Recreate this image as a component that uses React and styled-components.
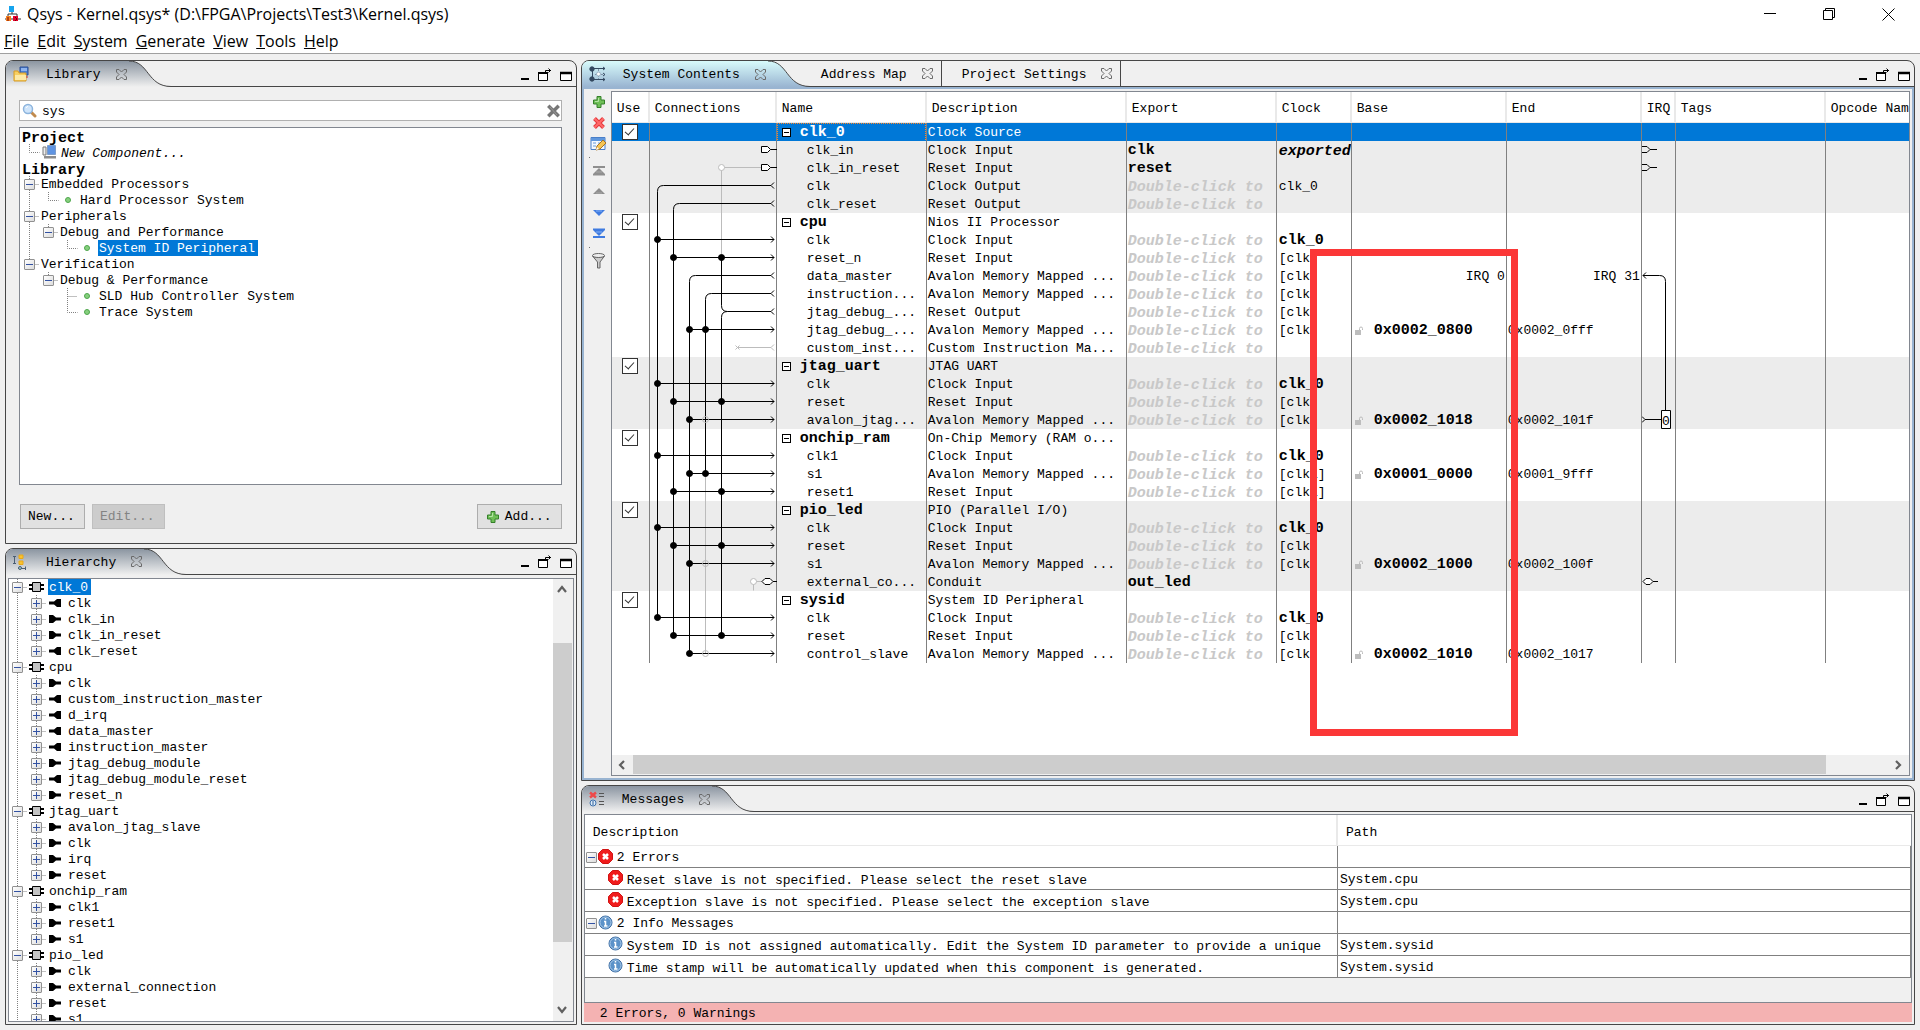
import React from 'react';
import styled, { createGlobalStyle, css } from 'styled-components';

const MONO = '"Liberation Mono", "Noto Sans CJK SC", monospace';
const UI = '"Open Sans", "Noto Sans", sans-serif';
const LINE = '#464646';
const EDGE = '#828790';
const GRID = '#808080';
const SELECT = '#0078d7';
const FACE = '#f0f0f0';

const Global = createGlobalStyle`
  *, *::before, *::after { box-sizing: border-box; }
  body { margin: 0; background: ${FACE}; color: #000; font: 13px/16px ${MONO}; }
  button { font: inherit; color: inherit; padding: 0; border: 0; background: none; }
  svg { display: block; flex: none; }
`;

const Window = styled.div`
  height: 100vh;
  min-height: 640px;
  display: flex;
  flex-direction: column;
  overflow: hidden;
`;
const TitleBar = styled.header`
  display: flex;
  align-items: center;
  height: 30px;
  padding: 0 25px 2px 5px;
  gap: 6px;
  background: #fff;
`;
const TitleText = styled.h1`
  flex: 1;
  margin: 0;
  font: 400 16px/20px ${UI};
`;
const WindowButtons = styled.div`
  display: flex;
  gap: 46px;
`;
const MenuBar = styled.nav`
  display: flex;
  align-items: center;
  gap: 8px;
  height: 24px;
  padding: 0 4px 2px;
  background: #fff;
  border-bottom: 1px solid #a0a0a0;
`;
const MenuItem = styled.button`
  font: 400 16px/20px ${UI};
  &::first-letter { text-decoration: underline; }
`;
const Workspace = styled.main`
  flex: 1;
  min-height: 0;
  display: grid;
  grid-template-columns: minmax(0, 3fr) minmax(0, 7fr);
  gap: 4px;
  padding: 6px 5px 5px;
`;
const Column = styled.div`
  display: flex;
  flex-direction: column;
  gap: 4px;
  min-height: 0;
  min-width: 0;
`;

/* Panels */
const PanelBox = styled.section`
  flex: ${(p) => p.$grow} 1 0;
  min-height: 0;
  display: flex;
  flex-direction: column;
  border: 1px solid ${LINE};
  border-radius: 8px 8px 0 0;
  overflow: hidden;
`;
const TabStrip = styled.div`
  display: flex;
  height: 26px;
  flex: none;
  border-bottom: 1px solid ${LINE};
`;
const gradients = {
  idle: ['#8b95a1', '#f0f0f0'],
  focus: ['#d8fbfb', '#99b4d1'],
};
const ActiveTab = styled.div`
  display: flex;
  height: 26px;
`;
const TabFace = styled.div`
  display: flex;
  align-items: center;
  height: 26px;
  padding: 0 2px 0 7px;
  background: linear-gradient(${(p) => gradients[p.$tone].join(', ')});
`;
const TabLabel = styled.h2`
  margin: 0 15px 0 17px;
  padding-top: 2px;
  font: 400 13px/16px ${MONO};
`;
const SideTab = styled.button`
  display: flex;
  align-items: center;
  gap: 15px;
  padding: 0 8px 0 ${(p) => (p.$first ? '11px' : '20px')};
  border-right: 1px solid ${LINE};
`;
const SideLabel = styled.span`
  padding-top: 2px;
`;
const PanelTools = styled.div`
  display: flex;
  align-items: center;
  gap: 8px;
  margin-left: auto;
  padding: 2px 4px 0 0;
`;

/* Library */
const LibraryBody = styled.div`
  flex: 1;
  min-height: 0;
  display: flex;
  flex-direction: column;
  padding: 13px 14px 14px 13px;
`;
const SearchField = styled.label`
  display: flex;
  align-items: center;
  height: 21px;
  flex: none;
  padding: 0 1px 0 2px;
  background: #fff;
  border: 1px solid #b0b0b0;
`;
const SearchInput = styled.input`
  flex: 1;
  min-width: 0;
  margin-left: 5px;
  padding: 2px 0 0;
  border: 0;
  outline: 0;
  background: none;
  font: 13px/16px ${MONO};
  color: #000;
`;
const TreeBox = styled.div`
  flex: 1;
  min-height: 0;
  display: flex;
  margin-top: ${(p) => (p.$inset ? '0' : '6px')};
  background: #fff;
  border: 1px solid ${EDGE};
`;
const TreeList = styled.ul`
  flex: 1;
  min-width: 0;
  margin: 0;
  padding: ${(p) => (p.$top ? '0 1px' : '0')};
  list-style: none;
  overflow: hidden;
`;
const TreeRow = styled.li`
  display: flex;
  align-items: center;
  height: 16px;
`;
const NodeIcon = styled.span`
  display: flex;
  justify-content: center;
  width: 20px;
  padding-right: ${(p) => (p.$wide ? 4 : 2)}px;
`;
const NodeText = styled.span`
  padding: 2px 3px 0 1px;
  line-height: 14px;
  white-space: pre;
  ${(p) => p.$heading && css`font-size: 15px; font-weight: 700; padding-top: 5px; line-height: 11px;`}
  ${(p) => p.$italic && css`font-style: italic; padding-top: 4px; line-height: 12px;`}
  ${(p) => p.$selected && css`background: ${SELECT}; color: #fff;`}
`;
const ToggleCell = styled.span`
  display: flex;
  align-items: center;
  width: 19px;
  height: 16px;
  position: relative;
`;
const Toggle = styled.button`
  position: absolute;
  left: 3px;
  top: 3px;
  width: 11px;
  height: 11px;
  border: 1px solid #919191;
  border-radius: 1px;
  background: linear-gradient(135deg, #fff, #dcdcdc);
  svg { margin: 1px; }
`;
const ButtonRow = styled.div`
  display: flex;
  gap: 7px;
  margin-top: 19px;
  padding-left: 1px;
`;
const PushButton = styled.button`
  display: flex;
  align-items: center;
  gap: 5px;
  height: 25px;
  padding: 1px 7px 0;
  min-width: 65px;
  background: #e1e1e1;
  border: 1px solid #adadad;
  ${(p) => p.$end && css`margin-left: auto; min-width: 85px; padding-left: 8px;`}
  &:disabled { color: #838383; background: #ccc; border-color: #bfbfbf; min-width: 73px; }
`;
const HierarchyBody = styled.div`
  flex: 1;
  min-height: 0;
  display: flex;
  padding: 3px 2px 2px;
`;
const VBar = styled.div`
  display: flex;
  flex-direction: column;
  align-items: center;
  width: 20px;
  padding: 4px 1px 5px 0;
  background: ${FACE};
`;
const VThumb = styled.div`
  flex: 300;
  width: 19px;
  margin-top: 48px;
  background: #cdcdcd;
`;
const VSpace = styled.div`flex: 62;`;

/* System contents */
const SystemBody = styled.div`
  flex: 1;
  min-height: 0;
  display: flex;
  border: 2px solid #99b4d1;
  padding: 2px 2px 2px 0;
`;
const ToolColumn = styled.div`
  display: flex;
  flex-direction: column;
  align-items: center;
  width: 27px;
  padding: 3px 0 0 3px;
  gap: 5px;
`;
const ToolButton = styled.button`
  display: grid;
  place-items: center;
  width: 20px;
  height: 16px;
`;
const ToolDivider = styled.span`
  width: 1px;
  height: 1px;
  align-self: flex-start;
  margin-left: 2px;
  background: #707070;
`;
const GridFrame = styled.div`
  flex: 1;
  min-width: 0;
  display: flex;
  flex-direction: column;
  position: relative;
  background: #fff;
  border: 1px solid ${EDGE};
`;
const GridView = styled.div`
  flex: 1;
  min-height: 0;
  overflow: hidden;
`;
const DataTable = styled.table`
  width: 100%;
  table-layout: fixed;
  border-spacing: 0;
`;
const HeadCell = styled.th`
  height: 31px;
  padding: 4px 0 0 5px;
  overflow: hidden;
  font-weight: 400;
  text-align: left;
  white-space: nowrap;
  border-right: 2px solid #e9e9e9;
  border-bottom: 1px solid #e9e9e9;
  &:last-child { border-right: 0; }
`;
const GridRow = styled.tr`
  background: ${(p) => (p.$selected ? SELECT : p.$shade ? '#ececec' : '#fff')};
  color: ${(p) => (p.$selected ? '#fff' : '#000')};
`;
const Cell = styled.td`
  height: 18px;
  padding: 1px 1px 0;
  line-height: 17px;
  white-space: nowrap;
  overflow: ${(p) => (p.$canvas ? 'visible' : 'hidden')};
  position: ${(p) => (p.$canvas ? 'relative' : 'static')};
  text-align: ${(p) => p.$align || 'left'};
  border-right: 1px solid ${GRID};
  &:last-child { border-right: 0; }
`;
const Wires = styled.svg`
  position: absolute;
  left: 0;
  top: 0;
`;
const NameBox = styled.div`
  display: flex;
  align-items: center;
  height: 17px;
  padding-left: ${(p) => (p.$child ? 29 : 4)}px;
  gap: 9px;
  ${(p) => p.$focus && css`outline: 1px dotted #ff8728;`}
`;
const Fold = styled.button`
  display: grid;
  place-items: center;
  width: 9px;
  height: 9px;
  background: #fff;
  border: 1px solid #000;
  &::after { content: ''; width: 5px; height: 1px; background: #000; }
`;
const Strong = styled.b`
  display: block;
  font-size: 15px;
  line-height: 17px;
  font-weight: 700;
`;
const Hint = styled.span`
  display: block;
  padding-top: 3px;
  font: italic 700 15px/14px ${MONO};
  color: ${(p) => (p.$dark ? '#000' : '#c8c8c8')};
`;
const ClockBox = styled.div`
  padding-left: 1px;
  height: 17px;
`;
const BaseBox = styled.div`
  display: flex;
  align-items: center;
  gap: 10px;
  height: 17px;
  padding-left: 2px;
`;
const UseBox = styled.input`
  appearance: none;
  display: grid;
  place-items: center;
  width: 16px;
  height: 16px;
  margin: 0 0 1px 9px;
  background: #fff;
  border: 1px solid #333;
  &:checked::after {
    content: '';
    width: 5px;
    height: 9px;
    margin-bottom: 3px;
    border: solid #333;
    border-width: 0 1px 1px 0;
    transform: rotate(42deg);
  }
`;
const HBar = styled.div`
  display: flex;
  align-items: center;
  height: 20px;
  flex: none;
  padding: 0 5px 1px 4px;
  background: ${FACE};
`;
const HThumb = styled.div`
  flex: 1193;
  height: 19px;
  margin-left: 5px;
  background: #cdcdcd;
`;
const HSpace = styled.div`flex: 66;`;
const RedFrame = styled.div`
  position: absolute;
  left: 698px;
  top: 157px;
  width: 208px;
  height: 487px;
  border: 7px solid #fb3737;
`;

/* Messages */
const MessagesBody = styled.div`
  flex: 1;
  min-height: 0;
  display: flex;
  flex-direction: column;
  padding: 2px;
`;
const MessagesFrame = styled.div`
  flex: 1;
  min-height: 0;
  overflow: hidden;
  border: 1px solid ${EDGE};
  background: ${FACE};
  ${HeadCell} { background: #fff; padding: 5px 0 0 8px; }
`;
const MessageCell = styled.td`
  height: 22px;
  padding: ${(p) => (p.$path ? '2px 0 0 2px' : '1px 0 0 1px')};
  background: #fff;
  white-space: nowrap;
  overflow: hidden;
  border-right: 1px solid ${GRID};
  border-bottom: 1px solid ${GRID};
`;
const MessageBox = styled.div`
  display: flex;
  align-items: center;
  gap: ${(p) => (p.$child ? 4 : 1)}px;
  height: 20px;
  padding-left: ${(p) => (p.$child ? 22 : 0)}px;
`;
const MessageIcon = styled.span`
  padding-bottom: ${(p) => (p.$child ? 4 : 2)}px;
`;
const MessageText = styled.span`
  padding-left: ${(p) => (p.$child ? 0 : 3)}px;
  padding-top: ${(p) => (p.$child ? 4 : 1)}px;
  line-height: 16px;
`;
const StatusBar = styled.footer`
  height: 19px;
  flex: none;
  padding: 2px 0 0 16px;
  line-height: 17px;
  background: #f4b2b2;
`;
const InlineToggle = styled(Toggle)`
  position: static;
  flex: none;
`;

/* Icons */
const CloseGlyph = () => (
  <svg width="11" height="11" viewBox="0 0 11 11" fill="none" stroke="#6a6a6a">
    <path d="M.5.5h2.500L5.500 3 8 .5h2.500V3L8 5.500 10.500 8v2.500H8L5.500 8 3 10.500H.5V8L3 5.500.5 3z" />
  </svg>
);
const MinGlyph = () => (
  <svg width="9" height="14" viewBox="0 0 9 14"><path d="M0 10h8v2H0z" /></svg>
);
const PopGlyph = () => (
  <svg width="14" height="14" viewBox="0 0 14 14" fill="none" stroke="#000">
    <path d="M.5 4.500h9v8h-9z" fill="#fff" />
    <path d="M0 4.500h10M0 5.500h10M7.500 4V2.500H13M10.500.5l2 2-2 2" />
  </svg>
);
const MaxGlyph = () => (
  <svg width="12" height="14" viewBox="0 0 12 14" fill="none" stroke="#000">
    <path d="M.5 4.500h11v8H.5z" fill="#fff" />
    <path d="M0 5h12" strokeWidth="2.500" />
  </svg>
);
const AppGlyph = () => (
  <svg width="16" height="18" viewBox="0 0 16 18">
    <path d="M7 5v4M3 12V9h9v3M0 14h16" stroke="#333" fill="none" />
    <path d="M4 1h5v6H4z" fill="#16a4ee" />
    <path d="M1 11h5v5H1z" fill="#f58220" />
    <path d="M8 11h5v5H8z" fill="#e5002d" />
    <path d="M3 12v4M10 12l2 2-2 2" stroke="#700" fill="none" />
  </svg>
);
const LibraryGlyph = () => (
  <svg width="16" height="16" viewBox="0 0 16 16">
    <path d="M7 1h8v8H7z" fill="#4a7fd0" stroke="#2c4f94" />
    <path d="M8 2h6v3H8z" fill="#8fb4ee" />
    <path d="M1 5h4l1 2h7v8H1z" fill="#f7cf62" stroke="#d79b25" />
    <path d="M2 9h11v5H2z" fill="#fde9a6" />
    <path d="M14 10v2" stroke="#c33" />
  </svg>
);
const HierarchyGlyph = () => (
  <svg width="16" height="16" viewBox="0 0 16 16" fill="none">
    <path d="M0 2.500h3M1.500 2v8M0 9.500h3" stroke="#4b5d72" />
    <path d="M6 1h4v3.500H6zM6 7h4v3.500H6z" fill="#f9c22f" stroke="#e8a818" />
    <path d="M5 14.500h8M12.500 12.500v4" stroke="#4b5d72" />
    <circle cx="7" cy="14" r="1.500" fill="#9cc" stroke="#4b5d72" />
  </svg>
);
const SystemGlyph = () => (
  <svg width="17" height="16" viewBox="0 0 17 16" fill="none" stroke="#33475f">
    <path d="M3 2.500h13M3 13.500h13M3.500 3v10" />
    <path d="M9.500 3v10M6 8.500h10" stroke="#7f93a8" strokeDasharray="2 1" />
    <circle cx="3" cy="3" r="2.200" fill="#33475f" />
    <circle cx="3" cy="13" r="2.200" fill="#33475f" />
    <circle cx="9.500" cy="8" r="2" fill="#fff" stroke="#9fb3c6" />
    <path d="M14 1l2 1.500L14 4M14 12l2 1.500L14 15M14 7l2 1.500L14 10" />
  </svg>
);
const MessagesGlyph = () => (
  <svg width="16" height="16" viewBox="0 0 16 16" fill="none">
    <path d="M1 1.500l6 5M7 1.500l-6 5" stroke="#ee4a4a" strokeWidth="2.500" />
    <circle cx="4" cy="12" r="3" fill="#dcebf8" stroke="#3f72ae" />
    <path d="M4 10v4" stroke="#2c5c98" />
    <path d="M10 2.500h5M10 5.500h5M10 10.500h5M10 13.500h5" stroke="#555" />
  </svg>
);
const SearchGlyph = () => (
  <svg width="15" height="16" viewBox="0 0 15 16">
    <path d="M9 9l4 4" stroke="#c08a4e" strokeWidth="3" strokeLinecap="round" />
    <circle cx="6" cy="6" r="4.500" fill="#cfe5fb" stroke="#8cb4dd" strokeWidth="1.500" />
    <path d="M4 5a2.500 2.500 0 012-1.500" stroke="#fff" fill="none" />
  </svg>
);
const ClearGlyph = () => (
  <svg width="13" height="14" viewBox="0 0 13 14">
    <path d="M2.500 3l8 8M10.500 3l-8 8" stroke="#777" strokeWidth="3.500" strokeLinecap="square" />
    <path d="M3 3l7 8" stroke="#999" />
  </svg>
);
const PlusGlyph = () => (
  <svg width="14" height="14" viewBox="0 0 14 14">
    <path d="M5 1.500h4v3.500h3.500v4H9v3.500H5V9H1.500V5H5z" fill="#6fbf57" stroke="#34802a" />
    <path d="M6.500 3v3.500H3" stroke="#b4e3a4" fill="none" />
  </svg>
);
const RemoveGlyph = () => (
  <svg width="14" height="14" viewBox="0 0 14 14">
    <path d="M2.500 2.500l9 9M11.500 2.500l-9 9" stroke="#e5383b" strokeWidth="4" />
    <path d="M2.500 2.500l9 9M11.500 2.500l-9 9" stroke="#ff6a6a" strokeWidth="2" />
  </svg>
);
const EditGlyph = () => (
  <svg width="17" height="16" viewBox="0 0 17 16">
    <path d="M1 1.500h14v12H1z" fill="#f3f8ff" stroke="#4a7fc8" />
    <path d="M1 2h14v3H1z" fill="#5f97dd" />
    <path d="M3 7h3M3 10h3M8 7h5" stroke="#6b9bd8" />
    <path d="M6 14l1-4 6-6 3 3-6 6z" fill="#f6c553" stroke="#a87424" />
    <path d="M6 14l1-3 2 2z" fill="#fff" />
  </svg>
);
const ArrowGlyph = ({ up, bar, color, light }) => (
  <svg width="14" height="12" viewBox="0 0 14 12">
    <g transform={up ? undefined : 'matrix(1 0 0 -1 0 11)'}>
      {bar && <path d="M1 1h12v2H1z" fill={color} />}
      <path d={bar ? 'M7 3l6 6H1z' : 'M7 2l6 6H1z'} fill={color} />
      <path d="M4 7h6" stroke={light} />
      {bar && <path d="M1 9h12v1.500H1z" fill={color} />}
    </g>
  </svg>
);
const FunnelGlyph = () => (
  <svg width="15" height="17" viewBox="0 0 15 17">
    <path d="M1.500 3l5 6v6h2.500v-6l4.500-6c-3 2-9 2-12 0z" fill="#ccc" stroke="#666" />
    <ellipse cx="7.500" cy="2.500" rx="6" ry="2" fill="#eee" stroke="#666" />
  </svg>
);
const LockGlyph = () => (
  <svg width="9" height="10" viewBox="0 0 9 10">
    <path d="M0 4h6v5H0z" fill="#bdbdbd" />
    <path d="M4.500 4V2.500q0-1.500 1.500-1.500t1.500 1.500V4" fill="none" stroke="#bdbdbd" />
  </svg>
);
const ChipGlyph = () => (
  <svg width="15" height="12" viewBox="0 0 15 12">
    <path d="M0 4h15M0 8h15" stroke="#000" strokeWidth="2" />
    <path d="M3.500 1.500h8v9h-8z" fill="#c4c4c4" stroke="#000" />
  </svg>
);
const PortGlyph = ({ out }) => (
  <svg width="12" height="8" viewBox="0 0 12 8">
    <path transform={out ? 'matrix(-1 0 0 1 12 0)' : undefined} d="M0 0h4l3 2.500h5v3H7L4 8H0z" />
  </svg>
);
const BulletGlyph = () => (
  <svg width="6" height="6" viewBox="0 0 6 6">
    <circle cx="3" cy="3" r="2.500" fill="#86cf7e" stroke="#4ea64c" />
  </svg>
);
const ComponentGlyph = () => (
  <svg width="15" height="14" viewBox="0 0 15 14">
    <path d="M1 2h3v8H1z" fill="#eee" stroke="#777" />
    <path d="M5.500 .5h8v9h-8z" fill="#5f94e2" stroke="#7d9cc8" />
    <path d="M2 11h12v2.500H2z" fill="#8c8c8c" />
  </svg>
);
const ErrorGlyph = () => (
  <svg width="15" height="15" viewBox="0 0 15 15">
    <path d="M4.500.5h6l4 4v6l-4 4h-6l-4-4v-6z" fill="#f01c1c" stroke="#d01414" />
    <path d="M5 5l5 5M10 5l-5 5" stroke="#fff" strokeWidth="2.500" />
  </svg>
);
const InfoGlyph = () => (
  <svg width="15" height="15" viewBox="0 0 15 15">
    <circle cx="7.500" cy="7.500" r="6.500" fill="#5b92c9" stroke="#3d6da3" />
    <circle cx="7.500" cy="7.500" r="5.500" fill="none" stroke="#a9c9e8" />
    <path d="M7.500 3v1.500M6 6.500h1.500v4M6 11h3.500" stroke="#fff" fill="none" strokeWidth="1.500" />
  </svg>
);
const ChevronGlyph = ({ d }) => (
  <svg width="12" height="12" viewBox="0 0 12 12" fill="none" stroke="#606060" strokeWidth="2.200">
    <path d={d} />
  </svg>
);
const SignGlyph = ({ plus }) => (
  <svg width="7" height="7" viewBox="0 0 7 7" stroke="#3352a3">
    <path d={plus ? 'M0 3.500h7M3.500 0v7' : 'M0 3.500h7'} />
  </svg>
);

/* Shared panel pieces */
function TabTail({ tone }) {
  const id = `tail-${tone}`;
  return (
    <svg width="42" height="26" viewBox="0 0 42 26">
      <defs>
        <linearGradient id={id} x1="0" y1="0" x2="0" y2="1">
          <stop offset="0" stopColor={gradients[tone][0]} />
          <stop offset="1" stopColor={gradients[tone][1]} />
        </linearGradient>
      </defs>
      <path d="M0 0C20 0 18 25.500 42 25.500V26H0z" fill={`url(#${id})`} />
      <path d="M0 0C20 0 18 25.500 42 25.500" fill="none" stroke={LINE} />
    </svg>
  );
}

function Panel({ title, icon, tone = 'idle', grow, tabs = [], children }) {
  return (
    <PanelBox $grow={grow} aria-label={title}>
      <TabStrip>
        <ActiveTab>
          <TabFace $tone={tone}>
            {icon}
            <TabLabel>{title}</TabLabel>
            <button aria-label={`Close ${title}`}><CloseGlyph /></button>
          </TabFace>
          <TabTail tone={tone} />
        </ActiveTab>
        {tabs.map((t, i) => (
          <SideTab key={t} $first={i === 0}><SideLabel>{t}</SideLabel><CloseGlyph /></SideTab>
        ))}
        <PanelTools>
          <button aria-label="Minimize"><MinGlyph /></button>
          <button aria-label="Detach"><PopGlyph /></button>
          <button aria-label="Maximize"><MaxGlyph /></button>
        </PanelTools>
      </TabStrip>
      {children}
    </PanelBox>
  );
}

const guidePaths = {
  line: 'M8.500 0v16',
  tee: 'M8.500 0v16M8.500 8.500h10',
  end: 'M8.500 0v8.500h10',
  above: 'M8.500 0v8M8.500 8.500h10',
  blank: '',
};
const Guide = ({ kind }) => (
  <svg width="19" height="16" viewBox="0 0 19 16" fill="none" stroke="#808080" strokeDasharray="1 1">
    <path d={guidePaths[kind]} />
  </svg>
);
const ToggleGuide = ({ kind, plus }) => (
  <ToggleCell>
    <Guide kind={kind} />
    <Toggle aria-label={plus ? 'Expand' : 'Collapse'}><SignGlyph plus={plus} /></Toggle>
  </ToggleCell>
);

/* Data */
const library = [
  { text: 'Project', heading: true },
  { guides: ['end'], icon: 'component', text: 'New Component...', italic: true },
  { text: 'Library', heading: true },
  { toggle: 'tee', text: 'Embedded Processors' },
  { guides: ['line', 'end'], icon: 'bullet', text: 'Hard Processor System' },
  { toggle: 'tee', text: 'Peripherals' },
  { guides: ['line'], toggle: 'above', text: 'Debug and Performance' },
  { guides: ['line', 'blank', 'end'], icon: 'bullet', text: 'System ID Peripheral', selected: true },
  { toggle: 'above', text: 'Verification' },
  { guides: ['blank'], toggle: 'above', text: 'Debug & Performance' },
  { guides: ['blank', 'blank', 'tee'], icon: 'bullet', text: 'SLD Hub Controller System' },
  { guides: ['blank', 'blank', 'end'], icon: 'bullet', text: 'Trace System' },
];
const hierarchy = [
  ['clk_0', '<clk >clk_in >clk_in_reset <clk_reset'],
  ['cpu', '>clk <custom_instruction_master <d_irq <data_master <instruction_master >jtag_debug_module <jtag_debug_module_reset >reset_n'],
  ['jtag_uart', '>avalon_jtag_slave >clk >irq >reset'],
  ['onchip_ram', '>clk1 >reset1 >s1'],
  ['pio_led', '>clk >external_connection >reset >s1'],
];
const AVALON = 'Avalon Memory Mapped ...';
const modules = [
  ['clk_0', 'Clock Source', [
    ['clk_in', 'Clock Input', { out: 'clk', clock: 'exported' }],
    ['clk_in_reset', 'Reset Input', { out: 'reset' }],
    ['clk', 'Clock Output', { clock: 'clk_0', plain: true }],
    ['clk_reset', 'Reset Output', {}],
  ]],
  ['cpu', 'Nios II Processor', [
    ['clk', 'Clock Input', { clock: 'clk_0' }],
    ['reset_n', 'Reset Input', { clock: '[clk]' }],
    ['data_master', AVALON, { clock: '[clk]', irqBase: 'IRQ 0', irqEnd: 'IRQ 31' }],
    ['instruction...', AVALON, { clock: '[clk]' }],
    ['jtag_debug_...', 'Reset Output', { clock: '[clk]' }],
    ['jtag_debug_...', AVALON, { clock: '[clk]', base: '0x0002_0800', end: '0x0002_0fff' }],
    ['custom_inst...', 'Custom Instruction Ma...', {}],
  ]],
  ['jtag_uart', 'JTAG UART', [
    ['clk', 'Clock Input', { clock: 'clk_0' }],
    ['reset', 'Reset Input', { clock: '[clk]' }],
    ['avalon_jtag...', AVALON, { clock: '[clk]', base: '0x0002_1018', end: '0x0002_101f' }],
  ]],
  ['onchip_ram', 'On-Chip Memory (RAM o...', [
    ['clk1', 'Clock Input', { clock: 'clk_0' }],
    ['s1', AVALON, { clock: '[clk1]', base: '0x0001_0000', end: '0x0001_9fff' }],
    ['reset1', 'Reset Input', { clock: '[clk1]' }],
  ]],
  ['pio_led', 'PIO (Parallel I/O)', [
    ['clk', 'Clock Input', { clock: 'clk_0' }],
    ['reset', 'Reset Input', { clock: '[clk]' }],
    ['s1', AVALON, { clock: '[clk]', base: '0x0002_1000', end: '0x0002_100f' }],
    ['external_co...', 'Conduit', { out: 'out_led' }],
  ]],
  ['sysid', 'System ID Peripheral', [
    ['clk', 'Clock Input', { clock: 'clk_0' }],
    ['reset', 'Reset Input', { clock: '[clk]' }],
    ['control_slave', AVALON, { clock: '[clk]', base: '0x0002_1010', end: '0x0002_1017' }],
  ]],
];
const columns = [
  ['Use', 38], ['Connections', 127], ['Name', 150], ['Description', 200], ['Export', 150],
  ['Clock', 75], ['Base', 155], ['End', 135], ['IRQ', 34], ['Tags', 150], ['Opcode Name', null],
];
const messages = [
  { kind: 'error', text: '2 Errors' },
  { kind: 'error', child: true, text: 'Reset slave is not specified. Please select the reset slave', path: 'System.cpu' },
  { kind: 'error', child: true, text: 'Exception slave is not specified. Please select the exception slave', path: 'System.cpu' },
  { kind: 'info', text: '2 Info Messages' },
  { kind: 'info', child: true, text: 'System ID is not assigned automatically. Edit the System ID parameter to provide a unique', path: 'System.sysid' },
  { kind: 'info', child: true, text: 'Time stamp will be automatically updated when this component is generated.', path: 'System.sysid' },
];

/* Wiring diagram: one lane every 16px, one row every 18px */
const rowY = (n) => n * 18 + 8.5;
const lane = [7.5, 23.5, 39.5, 55.5, 71.5, 87.5, 103.5];
const inputs = [[0, 6], [1, 7], [2, 11], [0, 14], [1, 15], [2, 16], [0, 18], [2, 19], [1, 20], [0, 22], [1, 23], [2, 24], [0, 27], [1, 28], [2, 29]];
const outputs = [[0, 3, 27], [1, 4, 28], [2, 8, 29], [3, 9, 19], [4, 10, 28]];
const joints = [...inputs, [3, 11], [3, 19], ...[7, 15, 20, 23, 28].map((r) => [4, r])];
const openJoints = [[4, 2], [3, 16], [3, 24], [3, 29], [6, 25]];

function ConnectionWires() {
  return (
    <Wires width="127" height="540" viewBox="0 0 127 540" fill="none" stroke="#000">
      <g stroke="#bcbcbc">
        <path d={`M${lane[4]} ${rowY(2)}H112M${lane[4]} ${rowY(2)}V${rowY(7)}`} />
        <path d={`M${lane[3]} ${rowY(19)}V${rowY(29)}`} />
        <path d={`M${lane[5]} ${rowY(12)}H121M124 ${rowY(12) - 3}l-3 3 3 3`} />
        <path d={`M${lane[5] - 2} ${rowY(12) - 2}l4 4m0-4l-4 4`} />
        <path d={`M112 ${rowY(25)}H${lane[6]}V${rowY(25) + 9}`} />
      </g>
      {outputs.map(([l, from, to]) => (
        <path key={l} d={`M${lane[l]} ${rowY(to)}V${rowY(from) + 6}q0-6 6-6H121M124 ${rowY(from) - 3}l-3 3 3 3`} />
      ))}
      <path d={`M${lane[4]} ${rowY(7)}V${rowY(10) - 6}q0 6 6 6`} />
      {inputs.map(([l, r]) => (
        <path key={r} d={`M${lane[l]} ${rowY(r)}H124M121 ${rowY(r) - 3}l3 3-3 3`} />
      ))}
      {joints.map(([l, r]) => (
        <circle key={`${l}-${r}`} cx={lane[l]} cy={rowY(r)} r="3" fill="#000" />
      ))}
      {openJoints.map(([l, r]) => (
        <circle key={`${l}-${r}`} cx={lane[l]} cy={rowY(r)} r="3" fill={l === 3 ? 'none' : '#fff'} stroke="#bcbcbc" />
      ))}
      {[1, 2].map((r) => (
        <path key={r} d={`M111.500 ${rowY(r) - 3}h6l3 3-3 3h-6zM120.500 ${rowY(r)}H127`} fill="#fff" />
      ))}
      <path d={`M112 ${rowY(25)}l3-3h5l3 3-3 3h-5zM123 ${rowY(25)}H127`} fill="#fff" />
    </Wires>
  );
}

function IrqWires() {
  return (
    <Wires width="34" height="540" viewBox="0 0 34 540" fill="none" stroke="#000">
      {[1, 2].map((r) => (
        <path key={r} d={`M0 ${rowY(r) - 3}h5l3 3-3 3h-5M8 ${rowY(r)}h7`} />
      ))}
      <path d={`M1 ${rowY(8)}H17.500q6 0 6 6V287M4 ${rowY(8) - 3}l-3 3 3 3`} />
      <path d={`M0 ${rowY(16) - 3}l3 3-3 3M3 ${rowY(16)}H19`} />
      <path d="M19.500 287.500h9v18h-9z" fill="#fff" />
      <text x="24" y="302" textAnchor="middle" fontSize="13" fill="#000" stroke="none">0</text>
      <path d={`M1 ${rowY(25)}l3-3h4l3 3-3 3h-4zM11 ${rowY(25)}h5`} fill="#fff" />
    </Wires>
  );
}

function LibraryTree() {
  return (
    <TreeList $top>
      {library.map((n) => (
        <TreeRow key={n.text}>
          {(n.guides || []).map((g, i) => <Guide key={i} kind={g} />)}
          {n.toggle && <ToggleGuide kind={n.toggle} />}
          {n.icon && (
            <NodeIcon>{n.icon === 'bullet' ? <BulletGlyph /> : <ComponentGlyph />}</NodeIcon>
          )}
          <NodeText $heading={n.heading} $italic={n.italic} $selected={n.selected}>{n.text}</NodeText>
        </TreeRow>
      ))}
    </TreeList>
  );
}

function HierarchyTree() {
  return (
    <TreeList>
      {hierarchy.map(([name, ports], m) => (
        <React.Fragment key={name}>
          <TreeRow>
            <ToggleGuide kind="tee" />
            <NodeIcon $wide><ChipGlyph /></NodeIcon>
            <NodeText $selected={m === 0}>{name}</NodeText>
          </TreeRow>
          {ports.split(' ').map((p, i, all) => (
            <TreeRow key={p}>
              <Guide kind="line" />
              <ToggleGuide kind={i === all.length - 1 ? 'above' : 'tee'} plus />
              <NodeIcon $wide><PortGlyph out={p[0] === '<'} /></NodeIcon>
              <NodeText>{p.slice(1)}</NodeText>
            </TreeRow>
          ))}
        </React.Fragment>
      ))}
    </TreeList>
  );
}

function ClockValue({ clock, plain }) {
  if (!clock) return null;
  if (clock === 'exported') return <Hint $dark>{clock}</Hint>;
  return plain || clock[0] === '[' ? clock : <Strong>{clock}</Strong>;
}

function SystemTable() {
  return (
    <DataTable>
      <colgroup>
        {columns.map(([name, w]) => <col key={name} width={w || undefined} />)}
      </colgroup>
      <thead>
        <tr>{columns.map(([name]) => <HeadCell key={name}>{name}</HeadCell>)}</tr>
      </thead>
      <tbody>
        {modules.map(([name, description, ports], m) => (
          <React.Fragment key={name}>
            <GridRow $selected={m === 0} $shade={m % 2 === 0}>
              <Cell><UseBox type="checkbox" defaultChecked aria-label={`Use ${name}`} /></Cell>
              <Cell $canvas={m === 0}>{m === 0 && <ConnectionWires />}</Cell>
              <Cell>
                <NameBox $focus={m === 0}>
                  <Fold aria-label={`Collapse ${name}`} />
                  <Strong>{name}</Strong>
                </NameBox>
              </Cell>
              <Cell>{description}</Cell>
              <Cell /><Cell /><Cell /><Cell />
              <Cell $canvas={m === 0}>{m === 0 && <IrqWires />}</Cell>
              <Cell /><Cell />
            </GridRow>
            {ports.map(([port, kind, v], i) => (
              <GridRow key={i} $shade={m % 2 === 0}>
                <Cell /><Cell />
                <Cell><NameBox $child>{port}</NameBox></Cell>
                <Cell>{kind}</Cell>
                <Cell>{v.out ? <Strong>{v.out}</Strong> : <Hint>Double-click to</Hint>}</Cell>
                <Cell><ClockBox><ClockValue clock={v.clock} plain={v.plain} /></ClockBox></Cell>
                <Cell $align={v.irqBase ? 'right' : 'left'}>
                  {v.base ? <BaseBox><LockGlyph /><Strong>{v.base}</Strong></BaseBox> : v.irqBase}
                </Cell>
                <Cell $align={v.irqEnd ? 'right' : 'left'}>{v.end || v.irqEnd}</Cell>
                <Cell /><Cell /><Cell />
              </GridRow>
            ))}
          </React.Fragment>
        ))}
      </tbody>
    </DataTable>
  );
}

function MessageTable() {
  return (
    <DataTable>
      <colgroup><col /><col width="573" /></colgroup>
      <thead><tr><HeadCell>Description</HeadCell><HeadCell>Path</HeadCell></tr></thead>
      <tbody>
        {messages.map((m) => (
          <tr key={m.text}>
            <MessageCell>
              <MessageBox $child={m.child}>
                {!m.child && <InlineToggle aria-label="Collapse"><SignGlyph /></InlineToggle>}
                <MessageIcon $child={m.child}>
                  {m.kind === 'error' ? <ErrorGlyph /> : <InfoGlyph />}
                </MessageIcon>
                <MessageText $child={m.child}>{m.text}</MessageText>
              </MessageBox>
            </MessageCell>
            <MessageCell $path>{m.path}</MessageCell>
          </tr>
        ))}
      </tbody>
    </DataTable>
  );
}

const GREY = ['#8f8f8f', '#a8a8a8'];
const BLUE = ['#3f7be0', '#86b2f5'];

export default function App() {
  return (
    <Window>
      <Global />
      <TitleBar>
        <AppGlyph />
        <TitleText>Qsys - Kernel.qsys* (D:\FPGA\Projects\Test3\Kernel.qsys)</TitleText>
        <WindowButtons>
          <button aria-label="Minimize window">
            <svg width="13" height="13" viewBox="0 0 13 13" stroke="#000"><path d="M0 5.500h12" /></svg>
          </button>
          <button aria-label="Restore window">
            <svg width="13" height="13" viewBox="0 0 13 13" fill="none" stroke="#000"><path d="M.5 2.500h9v9h-9zM2.500 2V.5h9v9H10" /></svg>
          </button>
          <button aria-label="Close window">
            <svg width="13" height="13" viewBox="0 0 13 13" stroke="#000"><path d="M.5.5l12 12M12.500.5l-12 12" /></svg>
          </button>
        </WindowButtons>
      </TitleBar>
      <MenuBar>
        {['File', 'Edit', 'System', 'Generate', 'View', 'Tools', 'Help'].map((m) => (
          <MenuItem key={m}>{m}</MenuItem>
        ))}
      </MenuBar>
      <Workspace>
        <Column>
          <Panel title="Library" icon={<LibraryGlyph />} grow={484}>
            <LibraryBody>
              <SearchField>
                <SearchGlyph />
                <SearchInput aria-label="Search library" defaultValue="sys" />
                <button aria-label="Clear search"><ClearGlyph /></button>
              </SearchField>
              <TreeBox><LibraryTree /></TreeBox>
              <ButtonRow>
                <PushButton>New...</PushButton>
                <PushButton disabled>Edit...</PushButton>
                <PushButton $end><PlusGlyph />Add...</PushButton>
              </ButtonRow>
            </LibraryBody>
          </Panel>
          <Panel title="Hierarchy" icon={<HierarchyGlyph />} grow={477}>
            <HierarchyBody>
              <TreeBox $inset>
                <HierarchyTree />
                <VBar>
                  <ChevronGlyph d="M2 9l4-5 4 5" />
                  <VThumb />
                  <VSpace />
                  <ChevronGlyph d="M2 3l4 5 4-5" />
                </VBar>
              </TreeBox>
            </HierarchyBody>
          </Panel>
        </Column>
        <Column>
          <Panel title="System Contents" icon={<SystemGlyph />} tone="focus" grow={722} tabs={['Address Map', 'Project Settings']}>
            <SystemBody>
              <ToolColumn>
                <ToolButton aria-label="Add"><PlusGlyph /></ToolButton>
                <ToolButton aria-label="Remove"><RemoveGlyph /></ToolButton>
                <ToolButton aria-label="Edit"><EditGlyph /></ToolButton>
                <ToolDivider />
                <ToolButton aria-label="Move to top"><ArrowGlyph up bar color={GREY[0]} light={GREY[1]} /></ToolButton>
                <ToolButton aria-label="Move up"><ArrowGlyph up color={GREY[0]} light={GREY[1]} /></ToolButton>
                <ToolButton aria-label="Move down"><ArrowGlyph color={BLUE[0]} light={BLUE[1]} /></ToolButton>
                <ToolButton aria-label="Move to bottom"><ArrowGlyph bar color={BLUE[0]} light={BLUE[1]} /></ToolButton>
                <ToolDivider />
                <ToolButton aria-label="Filter"><FunnelGlyph /></ToolButton>
              </ToolColumn>
              <GridFrame>
                <GridView><SystemTable /></GridView>
                <HBar>
                  <ChevronGlyph d="M8 2L4 6l4 4" />
                  <HThumb />
                  <HSpace />
                  <ChevronGlyph d="M4 2l4 4-4 4" />
                </HBar>
                <RedFrame />
              </GridFrame>
            </SystemBody>
          </Panel>
          <Panel title="Messages" icon={<MessagesGlyph />} grow={239}>
            <MessagesBody>
              <MessagesFrame><MessageTable /></MessagesFrame>
              <StatusBar>2 Errors, 0 Warnings</StatusBar>
            </MessagesBody>
          </Panel>
        </Column>
      </Workspace>
    </Window>
  );
}
